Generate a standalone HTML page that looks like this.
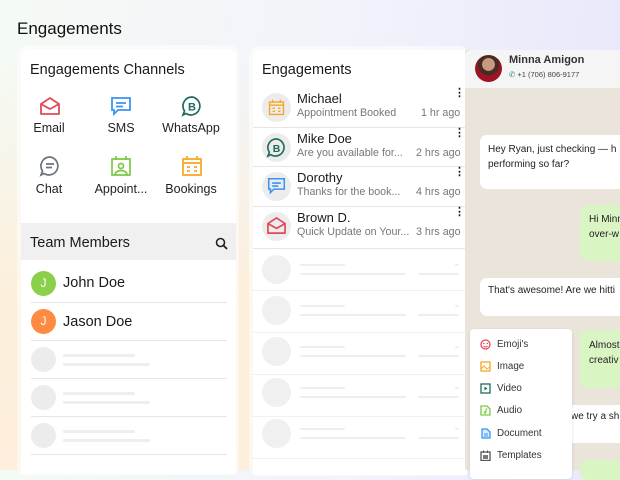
<!DOCTYPE html>
<html><head><meta charset="utf-8"><style>
*{margin:0;padding:0;box-sizing:border-box}
body{width:620px;height:470px;overflow:hidden;font-family:"Liberation Sans",sans-serif;color:#1a1a1a;position:relative;
background:linear-gradient(100deg,#f4faf4 0%,#f2f3fb 50%,#e6e6fb 100%);}
.bgb{position:absolute;left:0;top:60px;width:620px;height:410px;background:linear-gradient(180deg,rgba(253,240,220,0) 0%,rgba(253,238,215,.9) 60%,#fdeedd 100%)}
.abs{position:absolute}
h1{position:absolute;left:17px;top:19px;font-size:17px;font-weight:normal;color:#111}
.card{position:absolute;background:#fff}
.t{position:absolute;white-space:nowrap}
.sk{position:absolute;background:#eeeeee;border-radius:2px}
.circ{position:absolute;border-radius:50%;background:#ececec}
.hr{position:absolute;height:1px;background:#e6e6e6}
.lbl{position:absolute;font-size:12.5px;width:80px;text-align:center;color:#222}
</style></head><body>
<div class="bgb"></div>
<h1>Engagements</h1>

<div class="card" style="left:17px;top:45px;width:222px;height:430px;background:rgba(255,255,255,.5);border-radius:10px"></div>
<div class="card" style="left:21px;top:49px;width:215px;height:425px;border-radius:8px 8px 0 0"></div>
<div class="t" style="left:30px;top:62px;font-size:14.5px">Engagements Channels</div>
<svg class="abs" style="left:39px;top:96px" width="22" height="20" viewBox="0 0 22 20"><path d="M2 8 L11 2 L20 8 V18 H2 Z M2 8 L11 13 L20 8" fill="none" stroke="#e04a57" stroke-width="1.8" stroke-linejoin="round"/></svg>
<svg class="abs" style="left:110px;top:96px" width="22" height="20" viewBox="0 0 22 20"><path d="M2 2 H20 V14 H8 L4 18 V14 H2 Z M6 7 H16 M6 10.5 H13" fill="none" stroke="#3a94f5" stroke-width="1.8"/></svg>
<svg class="abs" style="left:181px;top:95px" width="22" height="22" viewBox="0 0 22 22"><path d="M11 2 A9 9 0 1 1 5 18.5 L2 20 L3.5 16 A9 9 0 0 1 11 2 Z" fill="none" stroke="#1f6b5e" stroke-width="1.7"/><text x="11" y="15.5" font-size="11" font-family="Liberation Sans" font-weight="bold" text-anchor="middle" fill="#1f6b5e">B</text></svg>
<div class="lbl" style="left:9px;top:121px">Email</div>
<div class="lbl" style="left:81px;top:121px">SMS</div>
<div class="lbl" style="left:151px;top:121px">WhatsApp</div>
<svg class="abs" style="left:39px;top:155px" width="22" height="22" viewBox="0 0 22 22"><path d="M11 2 A9 9 0 1 1 5 18.5 L2 20 L3.5 16 A9 9 0 0 1 11 2 Z M7 9 H15 M7 12.5 H13" fill="none" stroke="#6b7280" stroke-width="1.7"/></svg>
<svg class="abs" style="left:110px;top:155px" width="22" height="22" viewBox="0 0 22 22"><path d="M2 4 H20 V20 H2 Z M6 1 V5 M16 1 V5 M5 20 C5 14 17 14 17 20" fill="none" stroke="#7ac943" stroke-width="1.7"/><circle cx="11" cy="11" r="2.5" fill="none" stroke="#7ac943" stroke-width="1.7"/></svg>
<svg class="abs" style="left:181px;top:155px" width="22" height="22" viewBox="0 0 22 22"><path d="M2 4 H20 V20 H2 Z M6 1 V5 M16 1 V5 M2 8 H20 M6 12 H9 M13 12 H16 M6 16 H9 M13 16 H16" fill="none" stroke="#f5a623" stroke-width="1.7"/></svg>
<div class="lbl" style="left:9px;top:182px">Chat</div>
<div class="lbl" style="left:81px;top:182px">Appoint...</div>
<div class="lbl" style="left:151px;top:182px">Bookings</div>
<div class="abs" style="left:21px;top:223px;width:215px;height:37px;background:#f0f0f0"></div>
<div class="t" style="left:30px;top:235px;font-size:14.5px">Team Members</div>
<svg class="abs" style="left:215px;top:237px" width="13" height="13" viewBox="0 0 13 13"><circle cx="5.5" cy="5.5" r="4" fill="none" stroke="#222" stroke-width="1.6"/><path d="M8.5 8.5 L12 12" stroke="#222" stroke-width="1.8"/></svg>
<div class="circ" style="left:31px;top:271px;width:25px;height:25px;background:#8bcf4a;color:#fff;font-size:12px;text-align:center;line-height:25px">J</div>
<div class="t" style="left:63px;top:275px;font-size:14.5px">John Doe</div>
<div class="hr" style="left:31px;top:302px;width:196px"></div>
<div class="circ" style="left:31px;top:309px;width:25px;height:25px;background:#ff8a42;color:#fff;font-size:12px;text-align:center;line-height:25px">J</div>
<div class="t" style="left:63px;top:314px;font-size:14.5px">Jason Doe</div>
<div class="hr" style="left:31px;top:340px;width:196px"></div>
<div class="circ" style="left:31px;top:347px;width:25px;height:25px"></div><div class="sk" style="left:63px;top:354px;width:72px;height:3px"></div><div class="sk" style="left:63px;top:363px;width:87px;height:3px"></div>
<div class="hr" style="left:31px;top:378px;width:196px"></div>
<div class="circ" style="left:31px;top:385px;width:25px;height:25px"></div><div class="sk" style="left:63px;top:392px;width:72px;height:3px"></div><div class="sk" style="left:63px;top:401px;width:87px;height:3px"></div>
<div class="hr" style="left:31px;top:416px;width:196px"></div>
<div class="circ" style="left:31px;top:423px;width:25px;height:25px"></div><div class="sk" style="left:63px;top:430px;width:72px;height:3px"></div><div class="sk" style="left:63px;top:439px;width:87px;height:3px"></div>
<div class="hr" style="left:31px;top:454px;width:196px"></div>

<div class="card" style="left:249px;top:46px;width:220px;height:430px;background:rgba(255,255,255,.5);border-radius:10px"></div>
<div class="card" style="left:253px;top:50px;width:214px;height:425px;border-radius:8px 0 0 0"></div>
<div class="t" style="left:262px;top:62px;font-size:14.5px">Engagements</div>
<div class="circ" style="left:262px;top:93px;width:29px;height:29px"></div>
<svg class="abs" style="left:268px;top:99px" width="17" height="17" viewBox="0 0 22 22"><path d="M2 4 H20 V20 H2 Z M6 1 V5 M16 1 V5 M2 8 H20 M6 12 H9 M13 12 H16 M6 16 H9 M13 16 H16" fill="none" stroke="#f5a623" stroke-width="1.8"/></svg>
<div class="t" style="left:297px;top:91px;font-size:13px">Michael</div>
<div class="t" style="left:297px;top:107px;font-size:10.7px;color:#777">Appointment Booked</div>
<div class="t" style="left:421px;top:107px;font-size:10.7px;color:#777">1 hr ago</div>
<div class="t" style="left:454px;top:86px;font-size:11px;font-weight:bold">⋮</div>
<div class="hr" style="left:253px;top:127px;width:212px"></div>

<div class="circ" style="left:262px;top:133px;width:29px;height:29px"></div>
<svg class="abs" style="left:266px;top:137px" width="21" height="21" viewBox="0 0 22 22"><path d="M11 2 A9 9 0 1 1 5 18.5 L2 20 L3.5 16 A9 9 0 0 1 11 2 Z" fill="none" stroke="#1f6b5e" stroke-width="1.7"/><text x="11" y="15.5" font-size="11" font-family="Liberation Sans" font-weight="bold" text-anchor="middle" fill="#1f6b5e">B</text></svg>
<div class="t" style="left:297px;top:131px;font-size:13px">Mike Doe</div>
<div class="t" style="left:297px;top:147px;font-size:10.7px;color:#777">Are you available for...</div>
<div class="t" style="left:416px;top:147px;font-size:10.7px;color:#777">2 hrs ago</div>
<div class="t" style="left:454px;top:126px;font-size:11px;font-weight:bold">⋮</div>
<div class="hr" style="left:253px;top:166px;width:212px"></div>

<div class="circ" style="left:262px;top:172px;width:29px;height:29px"></div>
<svg class="abs" style="left:267px;top:177px" width="19" height="19" viewBox="0 0 22 22"><path d="M2 2 H20 V14 H8 L4 18 V14 H2 Z M6 7 H16 M6 10.5 H13" fill="none" stroke="#3a94f5" stroke-width="1.8"/></svg>
<div class="t" style="left:297px;top:170px;font-size:13px">Dorothy</div>
<div class="t" style="left:297px;top:186px;font-size:10.7px;color:#777">Thanks for the book...</div>
<div class="t" style="left:416px;top:186px;font-size:10.7px;color:#777">4 hrs ago</div>
<div class="t" style="left:454px;top:165px;font-size:11px;font-weight:bold">⋮</div>
<div class="hr" style="left:253px;top:206px;width:212px"></div>

<div class="circ" style="left:262px;top:212px;width:29px;height:29px"></div>
<svg class="abs" style="left:266px;top:216px" width="21" height="19" viewBox="0 0 22 20"><path d="M2 8 L11 2 L20 8 V18 H2 Z M2 8 L11 13 L20 8" fill="none" stroke="#e04a57" stroke-width="1.8" stroke-linejoin="round"/></svg>
<div class="t" style="left:297px;top:210px;font-size:13px">Brown D.</div>
<div class="t" style="left:297px;top:226px;font-size:10.7px;color:#777">Quick Update on Your...</div>
<div class="t" style="left:416px;top:226px;font-size:10.7px;color:#777">3 hrs ago</div>
<div class="t" style="left:454px;top:205px;font-size:11px;font-weight:bold">⋮</div>
<div class="hr" style="left:253px;top:248px;width:212px"></div>

<div class="circ" style="left:262px;top:255px;width:29px;height:29px;background:#f0f0f0"></div><div class="sk" style="left:300px;top:264px;width:45px;height:2px"></div><div class="sk" style="left:300px;top:273px;width:106px;height:2px"></div><div class="sk" style="left:418px;top:273px;width:41px;height:2px"></div><div class="sk" style="left:455px;top:264px;width:4px;height:2px"></div>
<div class="hr" style="left:253px;top:290px;width:212px;background:#f0f0f0"></div>
<div class="circ" style="left:262px;top:296px;width:29px;height:29px;background:#f0f0f0"></div><div class="sk" style="left:300px;top:305px;width:45px;height:2px"></div><div class="sk" style="left:300px;top:314px;width:106px;height:2px"></div><div class="sk" style="left:418px;top:314px;width:41px;height:2px"></div><div class="sk" style="left:455px;top:305px;width:4px;height:2px"></div>
<div class="hr" style="left:253px;top:332px;width:212px;background:#f0f0f0"></div>
<div class="circ" style="left:262px;top:337px;width:29px;height:29px;background:#f0f0f0"></div><div class="sk" style="left:300px;top:346px;width:45px;height:2px"></div><div class="sk" style="left:300px;top:355px;width:106px;height:2px"></div><div class="sk" style="left:418px;top:355px;width:41px;height:2px"></div><div class="sk" style="left:455px;top:346px;width:4px;height:2px"></div>
<div class="hr" style="left:253px;top:374px;width:212px;background:#f0f0f0"></div>
<div class="circ" style="left:262px;top:378px;width:29px;height:29px;background:#f0f0f0"></div><div class="sk" style="left:300px;top:387px;width:45px;height:2px"></div><div class="sk" style="left:300px;top:396px;width:106px;height:2px"></div><div class="sk" style="left:418px;top:396px;width:41px;height:2px"></div><div class="sk" style="left:455px;top:387px;width:4px;height:2px"></div>
<div class="hr" style="left:253px;top:416px;width:212px;background:#f0f0f0"></div>
<div class="circ" style="left:262px;top:419px;width:29px;height:29px;background:#f0f0f0"></div><div class="sk" style="left:300px;top:428px;width:45px;height:2px"></div><div class="sk" style="left:300px;top:437px;width:106px;height:2px"></div><div class="sk" style="left:418px;top:437px;width:41px;height:2px"></div><div class="sk" style="left:455px;top:428px;width:4px;height:2px"></div>
<div class="hr" style="left:253px;top:458px;width:212px;background:#f0f0f0"></div>

<div class="abs" style="left:465px;top:50px;width:155px;height:420px;background:#ebe4da"></div>
<div class="abs" style="left:465px;top:50px;width:155px;height:38px;background:#f5f5f5;border-radius:6px 0 0 0"></div>
<div class="circ" style="left:475px;top:55px;width:27px;height:27px;background:radial-gradient(circle at 50% 35%,#c89a80 0 28%,#4a2a22 30% 48%,#9e1426 50%)"></div>
<div class="t" style="left:509px;top:54px;font-size:11px;font-weight:bold;color:#333">Minna Amigon</div>
<div class="t" style="left:509px;top:70px;font-size:7.5px;color:#444"><span style="color:#2a8a6a">✆</span> +1 (706) 806-9177</div>
<div class="abs" style="left:480px;top:135px;width:150px;height:54px;background:#fff;border-radius:7px"></div>
<div class="t" style="left:488px;top:142px;font-size:10px;line-height:15px;color:#222">Hey Ryan, just checking — h<br>performing so far?</div>
<div class="abs" style="left:580px;top:205px;width:50px;height:56px;background:#d9f5c4;border-radius:7px"></div>
<div class="t" style="left:589px;top:212px;font-size:10px;line-height:15px;color:#222">Hi Minn<br>over-w</div>
<div class="abs" style="left:480px;top:278px;width:150px;height:38px;background:#fff;border-radius:7px"></div>
<div class="t" style="left:488px;top:285px;font-size:10px;color:#222">That's awesome! Are we hitti</div>
<div class="abs" style="left:580px;top:330px;width:50px;height:58px;background:#d9f5c4;border-radius:7px"></div>
<div class="t" style="left:589px;top:338px;font-size:10px;line-height:15px;color:#222">Almost<br>creativ</div>
<div class="abs" style="left:540px;top:405px;width:90px;height:38px;background:#fff;border-radius:7px"></div>
<div class="t" style="left:571px;top:411px;font-size:10px;color:#222">we try a sh</div>
<div class="abs" style="left:580px;top:460px;width:50px;height:20px;background:#d9f5c4;border-radius:7px"></div>
<div class="abs" style="left:470px;top:329px;width:102px;height:150px;background:#fff;border-radius:4px;box-shadow:0 1px 3px rgba(0,0,0,.12)"></div>
<svg class="abs" style="left:480px;top:339px" width="11" height="11"><circle cx="5.5" cy="5.5" r="4.5" fill="none" stroke="#e04a57" stroke-width="1.3"/><circle cx="3.8" cy="4.5" r=".8" fill="#e04a57"/><circle cx="7.2" cy="4.5" r=".8" fill="#e04a57"/><path d="M3.5 7 Q5.5 9 7.5 7" fill="none" stroke="#e04a57"/></svg>
<svg class="abs" style="left:480px;top:361px" width="11" height="11"><rect x="1" y="1" width="9" height="9" fill="none" stroke="#f5a623" stroke-width="1.3"/><path d="M1 8 L4 5 L7 8 L10 6" fill="none" stroke="#f5a623"/></svg>
<svg class="abs" style="left:480px;top:383px" width="11" height="11"><rect x="1" y="1" width="9" height="9" fill="none" stroke="#1f6b5e" stroke-width="1.3"/><path d="M4.5 3.5 L7.5 5.5 L4.5 7.5 Z" fill="#1f6b5e"/></svg>
<svg class="abs" style="left:480px;top:405px" width="11" height="11"><path d="M1 1 H7 L10 4 V10 H1 Z" fill="none" stroke="#7ac943" stroke-width="1.3"/><circle cx="5" cy="7.5" r="1.2" fill="#7ac943"/><path d="M6 7.5 V4 H7.5" fill="none" stroke="#7ac943"/></svg>
<svg class="abs" style="left:480px;top:428px" width="11" height="11"><path d="M2 1 H7 L10 4 V10 H2 Z" fill="#dbeafe" stroke="#3a94f5" stroke-width="1.3"/><path d="M4 6 H8 M4 8 H8" stroke="#3a94f5"/></svg>
<svg class="abs" style="left:480px;top:450px" width="11" height="11"><rect x="1" y="2" width="9" height="8.5" fill="none" stroke="#555" stroke-width="1.3"/><path d="M3.5 0.5 V3 M7.5 0.5 V3" stroke="#555"/><rect x="3" y="5" width="5" height="4" fill="#777"/></svg>
<div class="t" style="left:497px;top:339px;font-size:9.8px;color:#333">Emoji's</div>
<div class="t" style="left:497px;top:361px;font-size:9.8px;color:#333">Image</div>
<div class="t" style="left:497px;top:383px;font-size:9.8px;color:#333">Video</div>
<div class="t" style="left:497px;top:405px;font-size:9.8px;color:#333">Audio</div>
<div class="t" style="left:497px;top:428px;font-size:9.8px;color:#333">Document</div>
<div class="t" style="left:497px;top:450px;font-size:9.8px;color:#333">Templates</div>
</body></html>
